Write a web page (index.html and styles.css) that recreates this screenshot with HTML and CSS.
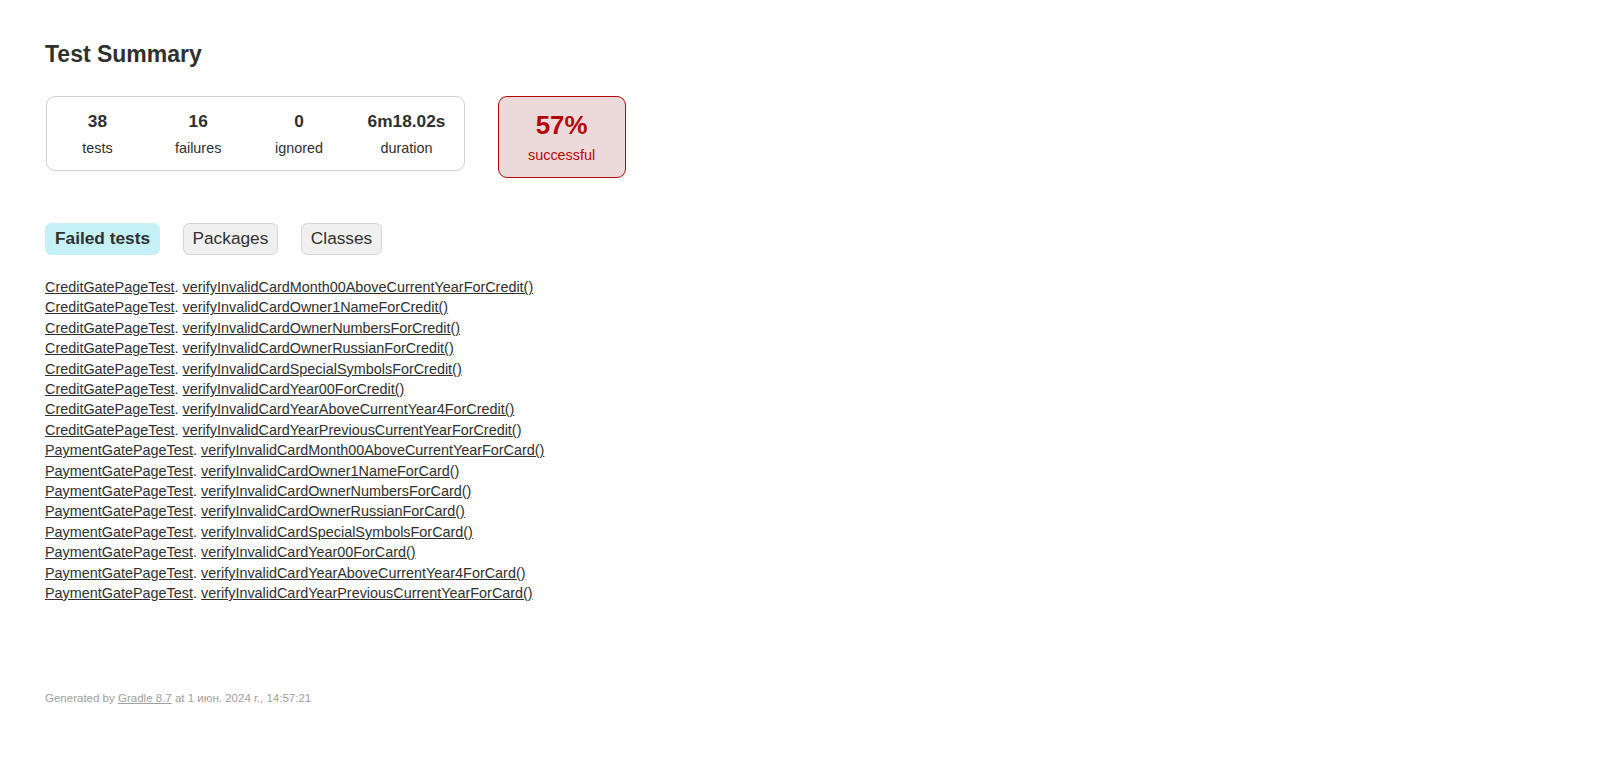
FILE: index.html
```html
<!DOCTYPE html>
<html lang="en">
<head>
<meta charset="utf-8">
<title>Test results - Test Summary</title>
<link rel="stylesheet" href="styles.css">
</head>
<body>
<div class="content">
  <h1 class="title">Test Summary</h1>
  <div class="summary">
    <div class="summary-group">
      <div class="info-box"><div class="counter">38</div><p>tests</p></div>
      <div class="info-box"><div class="counter">16</div><p>failures</p></div>
      <div class="info-box"><div class="counter">0</div><p>ignored</p></div>
      <div class="info-box duration"><div class="counter">6m18.02s</div><p>duration</p></div>
    </div>
    <div class="success-rate">
      <div class="percent">57%</div>
      <p>successful</p>
    </div>
  </div>
  <ul class="tab-links">
    <li class="selected"><a href="#tab0">Failed tests</a></li>
    <li><a href="#tab1">Packages</a></li>
    <li><a href="#tab2">Classes</a></li>
  </ul>
  <ul class="link-list">
    <li><a href="#">CreditGatePageTest</a>. <a href="#">verifyInvalidCardMonth00AboveCurrentYearForCredit()</a></li>
    <li><a href="#">CreditGatePageTest</a>. <a href="#">verifyInvalidCardOwner1NameForCredit()</a></li>
    <li><a href="#">CreditGatePageTest</a>. <a href="#">verifyInvalidCardOwnerNumbersForCredit()</a></li>
    <li><a href="#">CreditGatePageTest</a>. <a href="#">verifyInvalidCardOwnerRussianForCredit()</a></li>
    <li><a href="#">CreditGatePageTest</a>. <a href="#">verifyInvalidCardSpecialSymbolsForCredit()</a></li>
    <li><a href="#">CreditGatePageTest</a>. <a href="#">verifyInvalidCardYear00ForCredit()</a></li>
    <li><a href="#">CreditGatePageTest</a>. <a href="#">verifyInvalidCardYearAboveCurrentYear4ForCredit()</a></li>
    <li><a href="#">CreditGatePageTest</a>. <a href="#">verifyInvalidCardYearPreviousCurrentYearForCredit()</a></li>
    <li><a href="#">PaymentGatePageTest</a>. <a href="#">verifyInvalidCardMonth00AboveCurrentYearForCard()</a></li>
    <li><a href="#">PaymentGatePageTest</a>. <a href="#">verifyInvalidCardOwner1NameForCard()</a></li>
    <li><a href="#">PaymentGatePageTest</a>. <a href="#">verifyInvalidCardOwnerNumbersForCard()</a></li>
    <li><a href="#">PaymentGatePageTest</a>. <a href="#">verifyInvalidCardOwnerRussianForCard()</a></li>
    <li><a href="#">PaymentGatePageTest</a>. <a href="#">verifyInvalidCardSpecialSymbolsForCard()</a></li>
    <li><a href="#">PaymentGatePageTest</a>. <a href="#">verifyInvalidCardYear00ForCard()</a></li>
    <li><a href="#">PaymentGatePageTest</a>. <a href="#">verifyInvalidCardYearAboveCurrentYear4ForCard()</a></li>
    <li><a href="#">PaymentGatePageTest</a>. <a href="#">verifyInvalidCardYearPreviousCurrentYearForCard()</a></li>
  </ul>
  <div class="footer">
    <p>Generated by <a href="#">Gradle 8.7</a> at 1 июн. 2024 г., 14:57:21</p>
  </div>
</div>
</body>
</html>
```

FILE: styles.css
```css
html, body {
  margin: 0;
  padding: 0;
  background: #ffffff;
}

body {
  font-family: "Liberation Sans", Arial, sans-serif;
  font-size: 14.4px;
  color: #303030;
}

a, a:visited {
  color: #303030;
}

.content {
  padding: 27px 45px;
}

.title {
  font-size: 23px;
  font-weight: bold;
  margin: 14px 0 9px 0;
  white-space: nowrap;
}

.summary {
  display: flex;
  align-items: flex-start;
  margin: 27px 0 35px 0;
}

.summary-group {
  display: flex;
  margin: 1px;
  border: 1px solid #d0d0d0;
  border-radius: 9px;
  padding: 0.9px 0;
}

.info-box {
  width: 99px;
  padding: 13.5px 0.9px;
  text-align: center;
}

.info-box.duration {
  width: 112.5px;
}

.info-box p, .success-rate p {
  margin: 0;
}

.counter {
  font-size: 17.28px;
  font-weight: bold;
  margin-bottom: 7.2px;
}

.success-rate {
  width: 126px;
  margin: 1px 0 1px 32px;
  padding: 13.75px 0;
  text-align: center;
  border: 1px solid #b60808;
  border-radius: 9px;
  background-color: #ecdada;
  color: #b60808;
}

.percent {
  font-size: 25.92px;
  font-weight: bold;
  margin-bottom: 7.2px;
}

.tab-links {
  display: flex;
  list-style: none;
  margin: 0;
  padding: 9px 0;
}

.tab-links li {
  padding: 4.5px 9px;
  margin-right: 22.5px;
  border: 1px solid #d4d4d4;
  border-radius: 6.3px;
  background-color: #f0f0f0;
}

.tab-links li.selected {
  background-color: #c5f0f5;
  border-color: #c5f0f5;
}

.tab-links li.selected a {
  font-weight: bold;
}

.tab-links a {
  display: block;
  font-size: 17.28px;
  text-decoration: none;
}

.link-list {
  list-style: none;
  padding: 0;
  margin: 15.4px 0 0 0;
}

.link-list li {
  line-height: 16px;
  margin-bottom: 4.4px;
  white-space: nowrap;
}

.footer {
  margin-top: 91.5px;
  font-size: 11.52px;
  white-space: nowrap;
}

.footer p {
  margin: 0;
}

.footer, .footer a {
  color: #a0a0a0;
}
```
